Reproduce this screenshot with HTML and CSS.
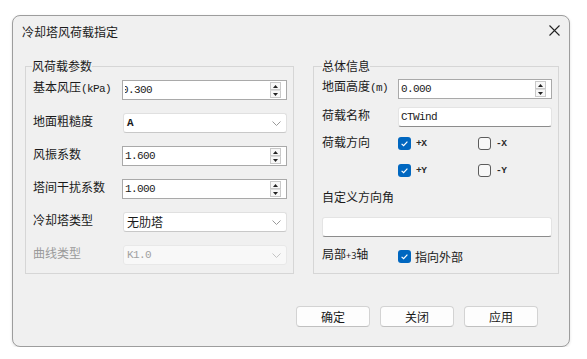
FILE: index.html
```html
<!DOCTYPE html>
<html lang="zh-CN">
<head>
<meta charset="utf-8">
<title>冷却塔风荷载指定</title>
<link rel="stylesheet" href="styles.css">
</head>
<body>
<div class="window">
  <div class="titlebar">
    <span class="title">冷却塔风荷载指定</span>
    <svg class="close" width="11" height="11" viewBox="0 0 11 11"><path d="M0.5 0.5L10.5 10.5M10.5 0.5L0.5 10.5" stroke="#222" stroke-width="1.1" fill="none"/></svg>
  </div>
  <div class="content">
    <div class="groups">
      <fieldset class="group left">
        <legend>风荷载参数</legend>
        <div class="form">
          <span class="lbl">基本风压<span class="asc">(kPa)</span></span>
          <div class="spin">
            <span class="val"><span class="scrolled">0.300</span></span>
            <span class="spinbtns">
              <span class="sb"><svg width="5" height="3" viewBox="0 0 5 3"><path d="M2.5 0L5 3H0Z" fill="#222"/></svg></span>
              <span class="sb"><svg width="5" height="3" viewBox="0 0 5 3"><path d="M0 0H5L2.5 3Z" fill="#222"/></svg></span>
            </span>
          </div>

          <span class="lbl">地面粗糙度</span>
          <div class="combo">
            <span class="ctxt mono bold">A</span>
            <svg class="chev" width="9" height="5" viewBox="0 0 9 5"><path d="M0.5 0.5L4.5 4.5L8.5 0.5" fill="none" stroke="#9a9a9a"/></svg>
          </div>

          <span class="lbl">风振系数</span>
          <div class="spin">
            <span class="val">1.600</span>
            <span class="spinbtns">
              <span class="sb"><svg width="5" height="3" viewBox="0 0 5 3"><path d="M2.5 0L5 3H0Z" fill="#222"/></svg></span>
              <span class="sb"><svg width="5" height="3" viewBox="0 0 5 3"><path d="M0 0H5L2.5 3Z" fill="#222"/></svg></span>
            </span>
          </div>

          <span class="lbl">塔间干扰系数</span>
          <div class="spin">
            <span class="val">1.000</span>
            <span class="spinbtns">
              <span class="sb"><svg width="5" height="3" viewBox="0 0 5 3"><path d="M2.5 0L5 3H0Z" fill="#222"/></svg></span>
              <span class="sb"><svg width="5" height="3" viewBox="0 0 5 3"><path d="M0 0H5L2.5 3Z" fill="#222"/></svg></span>
            </span>
          </div>

          <span class="lbl">冷却塔类型</span>
          <div class="combo">
            <span class="ctxt">无肋塔</span>
            <svg class="chev" width="9" height="5" viewBox="0 0 9 5"><path d="M0.5 0.5L4.5 4.5L8.5 0.5" fill="none" stroke="#9a9a9a"/></svg>
          </div>

          <span class="lbl disabled">曲线类型</span>
          <div class="combo off">
            <span class="ctxt mono">K1.0</span>
            <svg class="chev" width="9" height="5" viewBox="0 0 9 5"><path d="M0.5 0.5L4.5 4.5L8.5 0.5" fill="none" stroke="#c4c4c4"/></svg>
          </div>
        </div>
      </fieldset>

      <fieldset class="group right">
        <legend>总体信息</legend>
        <div class="rform">
          <div class="row r1">
            <span class="rlbl">地面高度<span class="asc">(m)</span></span>
            <div class="spin wide">
              <span class="val">0.000</span>
              <span class="spinbtns">
                <span class="sb"><svg width="5" height="3" viewBox="0 0 5 3"><path d="M2.5 0L5 3H0Z" fill="#222"/></svg></span>
                <span class="sb"><svg width="5" height="3" viewBox="0 0 5 3"><path d="M0 0H5L2.5 3Z" fill="#222"/></svg></span>
              </span>
            </div>
          </div>
          <div class="row r2">
            <span class="rlbl">荷载名称</span>
            <div class="text wide"><span class="mono">CTWind</span></div>
          </div>
          <div class="row r3">
            <span class="rlbl">荷载方向</span>
            <span class="cbx"><span class="box on"><svg width="13" height="13" viewBox="0 0 13 13"><path d="M3.6 6.9L5.6 8.7L9.4 4.6" fill="none" stroke="#fff" stroke-width="1.2"/></svg></span><span class="cbl">+X</span></span>
            <span class="cbx"><span class="box"></span><span class="cbl">-X</span></span>
          </div>
          <div class="row r4">
            <span class="cbx"><span class="box on"><svg width="13" height="13" viewBox="0 0 13 13"><path d="M3.6 6.9L5.6 8.7L9.4 4.6" fill="none" stroke="#fff" stroke-width="1.2"/></svg></span><span class="cbl">+Y</span></span>
            <span class="cbx"><span class="box"></span><span class="cbl">-Y</span></span>
          </div>
          <div class="r5">自定义方向角</div>
          <div class="text full r6"></div>
          <div class="row r7">
            <span class="rlbl">局部<span class="small">+3</span>轴</span>
            <span class="cbx"><span class="box on"><svg width="13" height="13" viewBox="0 0 13 13"><path d="M3.6 6.9L5.6 8.7L9.4 4.6" fill="none" stroke="#fff" stroke-width="1.2"/></svg></span><span class="cjl">指向外部</span></span>
          </div>
        </div>
      </fieldset>
    </div>

    <div class="buttons">
      <button class="btn">确定</button>
      <button class="btn">关闭</button>
      <button class="btn">应用</button>
    </div>
  </div>
</div>
</body>
</html>
```

FILE: styles.css
```css
* { box-sizing: border-box; }

body {
  margin: 0;
  background: #ffffff;
  font-family: "Noto Sans CJK SC", "Noto Sans", sans-serif;
  font-size: 12px;
  color: #1a1a1a;
}

.window {
  margin: 15px 0 0 12px;
  width: 558px;
  height: 332px;
  border: 1px solid #9d9d9d;
  border-radius: 8px;
  background: #f0f0f0;
  display: flex;
  flex-direction: column;
  box-shadow: 0 1px 3px rgba(0, 0, 0, 0.12);
}

.titlebar {
  height: 34px;
  display: flex;
  align-items: center;
  justify-content: space-between;
  padding: 0 9px 2px 9px;
  flex: none;
}

.title {
  line-height: 16px;
}

.close {
  display: block;
  margin-bottom: 3px;
}

.content {
  padding: 8px 10px 0 12px;
  display: flex;
  flex-direction: column;
}

.groups {
  display: flex;
  gap: 19px;
}

.group {
  margin: 0;
  min-width: 0;
  border: 1px solid #d6d6d6;
}

.group.left {
  width: 269px;
  padding: 6px 6px 8px 6px;
}

.group.right {
  width: 246px;
  padding: 5px 6px 8px 8px;
}

legend {
  padding: 0;
  line-height: 16px;
  font-size: 12px;
  color: #1a1a1a;
}

.form {
  display: grid;
  grid-template-columns: 90px 165px;
  grid-auto-rows: 20px;
  row-gap: 13px;
  align-items: center;
}

.lbl {
  padding-left: 1px;
  margin-bottom: 4px;
  line-height: 16px;
  white-space: nowrap;
}

.lbl.disabled {
  color: #9a9a9a;
}

.asc {
  font-family: "Liberation Mono", monospace;
  font-size: 11px;
  letter-spacing: -0.6px;
}

.mono {
  font-family: "Liberation Mono", monospace;
  font-size: 11px;
  letter-spacing: -0.6px;
}

.bold {
  font-weight: bold;
}

.spin {
  height: 20px;
  background: #ffffff;
  border: 1px solid #a9a9a9;
  display: flex;
  align-items: center;
  padding: 0 5px 0 2px;
}

.spin.wide {
  width: 154px;
}

.val {
  flex: 1;
  overflow: hidden;
  white-space: nowrap;
  font-family: "Liberation Mono", monospace;
  font-size: 11px;
  letter-spacing: -0.6px;
  line-height: 16px;
}

.scrolled {
  display: inline-block;
  margin-left: -3px;
}

.spinbtns {
  display: flex;
  flex-direction: column;
  width: 11px;
}

.sb {
  height: 8px;
  border: 1px solid #c9c9c9;
  background: #f7f7f7;
  display: flex;
  align-items: center;
  justify-content: center;
}

.sb + .sb {
  border-top-color: #dcdcdc;
}

.sb svg {
  display: block;
}

.combo {
  height: 20px;
  margin-left: 1px;
  background: #ffffff;
  border: 1px solid #e0e0e0;
  border-bottom-color: #c8c8c8;
  border-radius: 3px;
  display: flex;
  align-items: center;
  justify-content: space-between;
  padding: 0 5px 0 3px;
}

.combo.off {
  background: #f8f8f8;
  border-color: #e8e8e8;
  color: #a0a0a0;
}

.ctxt {
  line-height: 16px;
}

.chev {
  display: block;
}

.rform {
  display: flex;
  flex-direction: column;
}

.row {
  display: flex;
  align-items: center;
}

.rlbl {
  width: 76px;
  flex: none;
  line-height: 16px;
  margin-bottom: 4px;
  white-space: nowrap;
}

.r1 { height: 20px; }
.r2 { height: 20px; margin-top: 8px; }
.r3 { height: 13px; margin-top: 10px; }
.r4 { height: 13px; margin-top: 14px; padding-left: 76px; }
.r5 { margin-top: 12px; line-height: 16px; }
.r6 { margin-top: 12px; }
.r7 { height: 13px; margin-top: 13px; }

.text {
  height: 20px;
  background: #ffffff;
  border: 1px solid #e4e4e4;
  border-bottom-color: #8c8c8c;
  border-radius: 3px;
  display: flex;
  align-items: center;
  padding: 0 3px 0 2px;
}

.text.wide {
  width: 154px;
}

.text.full {
  width: 100%;
}

.cbx {
  display: flex;
  align-items: center;
  width: 80px;
  flex: none;
}

.box {
  width: 13px;
  height: 13px;
  border: 1px solid #5c5c5c;
  border-radius: 3px;
  background: #f8f8f8;
  flex: none;
}

.box.on {
  border: none;
  background: #0067c0;
}

.box svg {
  display: block;
}

.cbl {
  margin-left: 5px;
  font-family: "Liberation Mono", monospace;
  font-size: 9.5px;
  font-weight: bold;
  color: #2a2a2a;
  letter-spacing: -0.5px;
}

.cjl {
  margin-left: 4px;
  line-height: 16px;
}

.small {
  font-size: 9px;
  font-family: "Noto Sans", sans-serif;
}

.buttons {
  display: flex;
  justify-content: flex-end;
  gap: 10px;
  margin-top: 32px;
  padding-right: 21px;
}

.btn {
  width: 74px;
  height: 21px;
  padding: 0;
  background: #fdfdfd;
  border: 1px solid #d3d3d3;
  border-bottom-color: #c0c0c0;
  border-radius: 4px;
  font: inherit;
  font-size: 12px;
  line-height: 16px;
  color: #1a1a1a;
  display: flex;
  align-items: center;
  justify-content: center;
}
```
